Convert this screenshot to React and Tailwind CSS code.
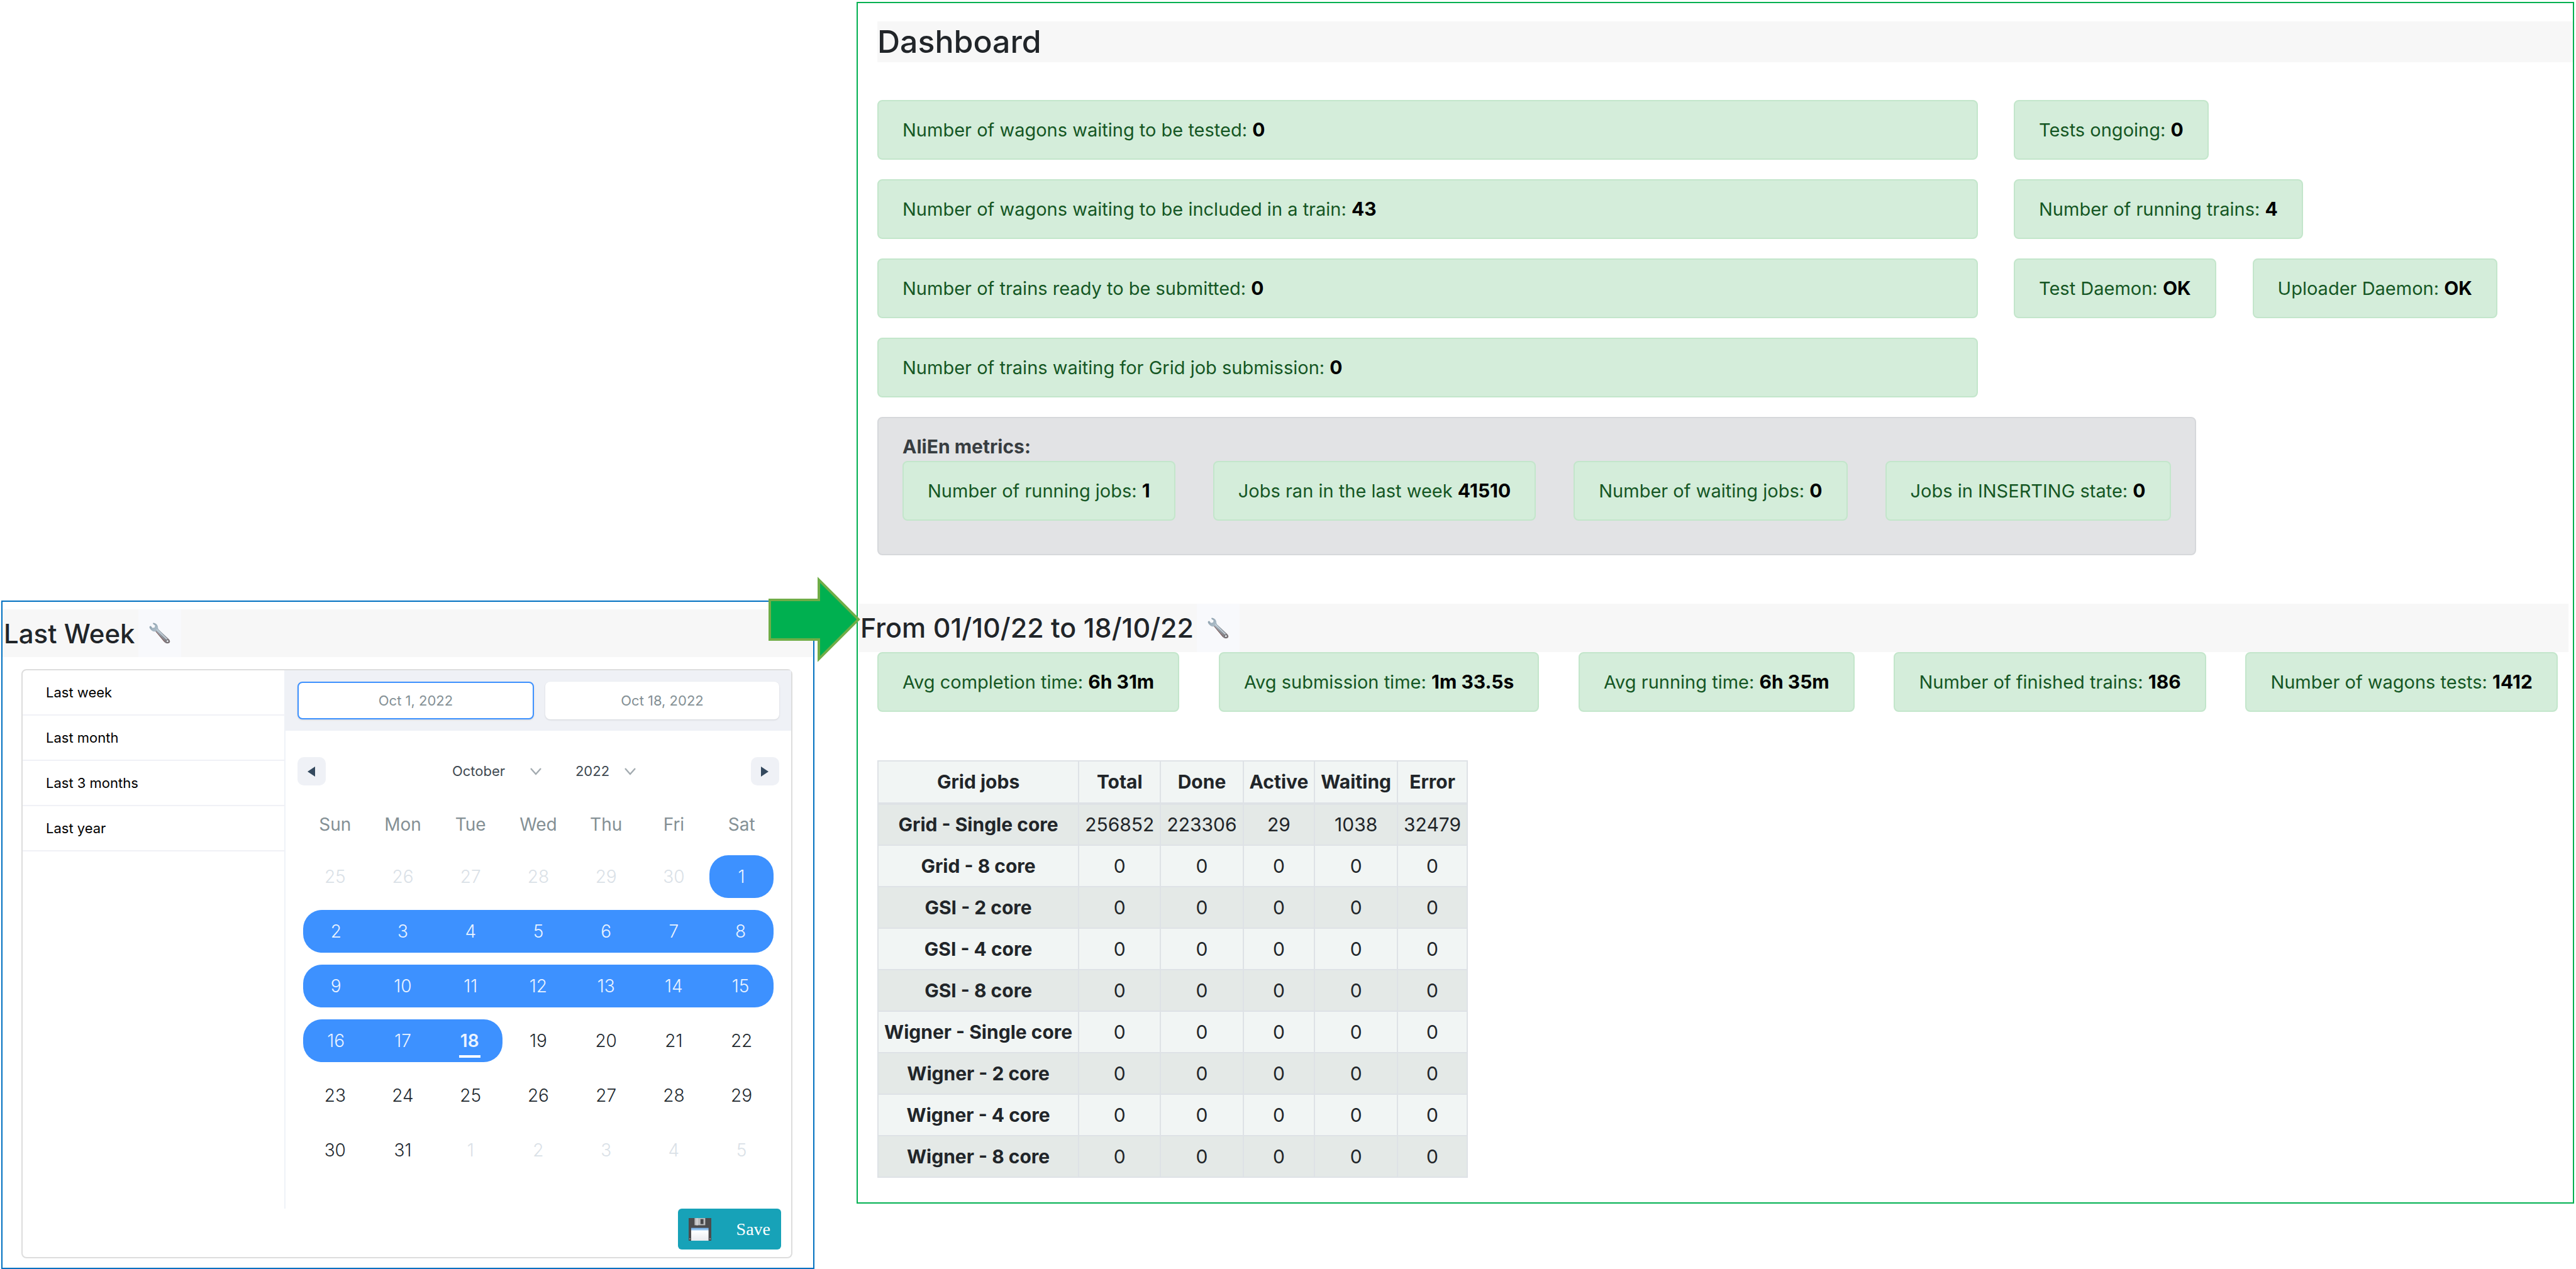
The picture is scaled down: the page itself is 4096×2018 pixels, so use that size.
import React from "react";

function Alert({ label, value, className = "" }) {
  return (
    <div className={`rounded-lg border-2 border-[#c3e6cb] bg-[#d4edda] px-[38px] py-[23px] text-[29px] leading-[45px] whitespace-nowrap text-[#155724] ${className}`}>
      {label} <strong className="text-[30px] leading-none font-bold text-black">{value}</strong>
    </div>
  );
}

function Wrench() {
  return (
    <svg viewBox="78 69 129 129" className="h-[34px] w-[34px]" aria-hidden="true">
      <defs>
        <linearGradient id="steel" x1="0" y1="0" x2="1" y2="1">
          <stop offset="0" stopColor="#8497a4" />
          <stop offset="0.3" stopColor="#a9bac6" />
          <stop offset="0.6" stopColor="#8f979f" />
          <stop offset="1" stopColor="#7d7073" />
        </linearGradient>
      </defs>
      <path
        d="M103 71 Q112 70 120 77 Q132 86 132 102 L135 110 L198 170 Q209 181 201 191 Q188 200 173 189 L118 123 Q108 125 97 119 Q82 110 80 96 Q82 89 89 90 L99 102 L112 98 L115 87 L101 77 Z"
        fill="url(#steel)"
      />
      <path d="M126 112 L184 168" stroke="#c3d0da" strokeWidth="7" strokeLinecap="round" />
      <path d="M119 122 L172 185" stroke="#85605f" strokeWidth="4" />
      <circle cx="189" cy="181" r="8" fill="#e6e9ee" stroke="#6e6c70" strokeWidth="4" />
    </svg>
  );
}

function Floppy() {
  return (
    <svg viewBox="0 0 36 36" className="h-9 w-9" aria-hidden="true">
      <defs>
        <linearGradient id="paper" x1="0" y1="0" x2="0" y2="1">
          <stop offset="0" stopColor="#6fabe6" />
          <stop offset="0.16" stopColor="#9cc8f2" />
          <stop offset="0.24" stopColor="#ffffff" />
          <stop offset="1" stopColor="#e9eaee" />
        </linearGradient>
      </defs>
      <path d="M0 0 H36 V36 H0 Z" fill="#4c4b4d" />
      <rect x="9.4" y="0" width="17" height="11.4" fill="#bcbcbe" />
      <rect x="12" y="0" width="3" height="11.4" fill="#cfcfd1" />
      <rect x="18.8" y="1.6" width="4.8" height="8" fill="#48474a" />
      <rect x="4" y="15.6" width="27.6" height="20.4" fill="url(#paper)" />
      <rect x="1" y="32" width="2" height="2" fill="#8b8b8d" />
      <rect x="33" y="32" width="2" height="2" fill="#8b8b8d" />
    </svg>
  );
}

function Heading({ children, className = "" }) {
  return (
    <div className={`flex items-stretch bg-[#f7f7f7] ${className}`}>
      <h2 className="pl-0.5 leading-[77px] font-medium whitespace-nowrap text-[#212529]">{children}</h2>
      <button type="button" aria-label="Change period" className="ml-[5px] flex w-[68px] items-center justify-center bg-[#f8f9fc]">
        <Wrench />
      </button>
    </div>
  );
}

function Chevron() {
  return (
    <svg viewBox="0 0 18 12" className="pointer-events-none absolute right-0 h-3 w-[18px]" aria-hidden="true">
      <path d="M1 1 L9 10 L17 1" fill="none" stroke="#a3abb0" strokeWidth="2.4" />
    </svg>
  );
}

const presets = ["Last week", "Last month", "Last 3 months", "Last year"];
const weekdays = ["Sun", "Mon", "Tue", "Wed", "Thu", "Fri", "Sat"];

const days = Array.from({ length: 42 }, (_, i) => {
  const n = i - 5;
  if (n < 1) return { day: n + 30, out: true };
  if (n > 31) return { day: n - 31, out: true };
  return { day: n, selected: n <= 18, start: n === 1, end: n === 18 };
});

function Day({ item, index }) {
  const col = index % 7;
  let look = "text-[#22292f] font-light";
  if (item.out) look = "text-[#dae1e7] font-light";
  if (item.selected) look = item.end ? "bg-[#3d91ff] text-[#eaf3ff] font-semibold" : "bg-[#3d91ff] text-[#eaf3ff] font-light";
  const left = item.selected && (col === 0 || item.start) ? "ml-[3px] rounded-l-[30px]" : "";
  const right = item.selected && (col === 6 || item.end) ? "mr-[3px] rounded-r-[30px]" : "";
  return (
    <button type="button" className={`relative h-[68px] text-[28px] ${look} ${left} ${right}`}>
      {item.day}
      {item.end && <span className="absolute bottom-[7px] left-1/2 h-1 w-[34px] -translate-x-1/2 bg-white" />}
    </button>
  );
}

function PeriodPanel() {
  return (
    <section className="relative border-2 border-[#0070c0] pt-3 pb-[15px]">
      <Heading className="h-[76px] text-[42px]">Last Week</Heading>
      <div className="mt-[19px] mr-[33px] ml-[30px] rounded-lg border-2 border-[#dddddd]">
        <div className="flex">
          <ul className="w-[34.2%] shrink-0 border-r-2 border-[#eff2f7]">
            {presets.map((p) => (
              <li key={p} className="border-b-2 border-[#f0f1f6]">
                <button type="button" className="block w-full pl-[37px] text-left text-[22px] leading-[70px] text-black">
                  {p}
                </button>
              </li>
            ))}
          </ul>
          <div className="flex-1">
            <div className="flex gap-[18px] bg-[#eff1f6] px-[19px] py-[18px]">
              <input
                aria-label="Start date"
                readOnly
                value="Oct 1, 2022"
                className="h-[60px] w-0 flex-1 rounded-lg border-2 border-[#3d91ff] bg-white text-center text-[22px] text-[#849095] shadow-sm"
              />
              <input
                aria-label="End date"
                readOnly
                value="Oct 18, 2022"
                className="h-[60px] w-0 flex-1 rounded-lg bg-white text-center text-[22px] text-[#849095] shadow"
              />
            </div>
            <div className="mt-[42px] flex items-center justify-between px-[19px]">
              <button type="button" aria-label="Previous month" className="flex h-[45px] w-[45px] items-center justify-center rounded-[10px] bg-[#eff1f6]">
                <svg viewBox="0 0 12 16" className="h-4 w-3" aria-hidden="true">
                  <path d="M12 0 V16 L0 8 Z" fill="#34495e" />
                </svg>
              </button>
              <div className="flex gap-[54px] pl-[18px] text-[22px] text-[#3f4a52]">
                <div className="relative flex items-center">
                  <select aria-label="Month" className="w-[142px] appearance-none bg-transparent">
                    <option>October</option>
                  </select>
                  <Chevron />
                </div>
                <div className="relative flex items-center">
                  <select aria-label="Year" className="w-[96px] appearance-none bg-transparent">
                    <option>2022</option>
                  </select>
                  <Chevron />
                </div>
              </div>
              <button type="button" aria-label="Next month" className="flex h-[45px] w-[45px] items-center justify-center rounded-[10px] bg-[#eff1f6]">
                <svg viewBox="0 0 12 16" className="h-4 w-3" aria-hidden="true">
                  <path d="M0 0 V16 L12 8 Z" fill="#34495e" />
                </svg>
              </button>
            </div>
            <div className="mt-11 grid grid-cols-7 px-[25px] text-center text-[28px] leading-9 text-[#849095]">
              {weekdays.map((d) => (
                <span key={d}>{d}</span>
              ))}
            </div>
            <div className="mt-[31px] grid grid-cols-7 gap-y-[19px] px-[25px] pb-[59px]">
              {days.map((item, i) => (
                <Day key={i} item={item} index={i} />
              ))}
            </div>
          </div>
        </div>
        <div className="flex justify-end pr-4 pb-3">
          <button type="button" className="flex h-[65px] items-center gap-10 rounded-md bg-[#17a2b8] px-[17px] font-['Liberation_Serif',serif] text-[28px] text-white">
            <Floppy />
            Save
          </button>
        </div>
      </div>
      <svg viewBox="0 0 146 136" className="absolute -top-10 -right-[75px] z-10 h-[136px] w-[146px]" aria-hidden="true">
        <path d="M2 37 H80 V5 L143 68 L80 131 V100 H2 Z" fill="#00b050" stroke="#70ad47" strokeWidth="4" />
      </svg>
    </section>
  );
}

const jobs = [
  ["Grid - Single core", 256852, 223306, 29, 1038, 32479],
  ["Grid - 8 core", 0, 0, 0, 0, 0],
  ["GSI - 2 core", 0, 0, 0, 0, 0],
  ["GSI - 4 core", 0, 0, 0, 0, 0],
  ["GSI - 8 core", 0, 0, 0, 0, 0],
  ["Wigner - Single core", 0, 0, 0, 0, 0],
  ["Wigner - 2 core", 0, 0, 0, 0, 0],
  ["Wigner - 4 core", 0, 0, 0, 0, 0],
  ["Wigner - 8 core", 0, 0, 0, 0, 0],
];

function JobsTable() {
  return (
    <table className="mt-[77px] ml-[31px] border-collapse text-center text-[30px] whitespace-nowrap text-[#212529]">
      <thead>
        <tr className="h-[68px] bg-[#f1f5f4]">
          {["Grid jobs", "Total", "Done", "Active", "Waiting", "Error"].map((h) => (
            <th key={h} scope="col" className="border-2 border-b-4 border-[#dee2e6] px-[9px] font-bold">
              {h}
            </th>
          ))}
        </tr>
      </thead>
      <tbody>
        {jobs.map(([name, ...values]) => (
          <tr key={name} className="h-[66px] odd:bg-[#e4e9e7] even:bg-[#f1f5f4]">
            <th scope="row" className="border-2 border-[#dee2e6] px-[9px] font-bold">
              {name}
            </th>
            {values.map((v, i) => (
              <td key={i} className="border-2 border-[#dee2e6] px-[9px]">
                {v}
              </td>
            ))}
          </tr>
        ))}
      </tbody>
    </table>
  );
}

function Dashboard() {
  return (
    <section className="mt-[3px] self-start border-2 border-[#00b050] pt-[29px] pb-[39px]">
      <h1 className="ml-[31px] bg-[#f7f7f7] text-[50px] leading-[65px] font-medium text-[#212529]">Dashboard</h1>
      <div className="mt-[60px] ml-[31px] grid grid-cols-[1750fr_889fr] gap-x-[57px] gap-y-[31px]">
        <Alert label="Number of wagons waiting to be tested:" value="0" />
        <div className="flex">
          <Alert label="Tests ongoing:" value="0" />
        </div>
        <Alert label="Number of wagons waiting to be included in a train:" value="43" />
        <div className="flex">
          <Alert label="Number of running trains:" value="4" />
        </div>
        <Alert label="Number of trains ready to be submitted:" value="0" />
        <div className="flex gap-[58px]">
          <Alert label="Test Daemon:" value="OK" />
          <Alert label="Uploader Daemon:" value="OK" />
        </div>
        <Alert label="Number of trains waiting for Grid job submission:" value="0" />
      </div>
      <div className="mt-[31px] ml-[31px] w-fit rounded-lg border-2 border-[#d6d8db] bg-[#e2e3e5] px-[38px] pt-[23px] pb-[53px]">
        <p className="text-[30px] leading-[45px] font-bold text-[#383d41]">AliEn metrics:</p>
        <div className="flex gap-[60px]">
          <Alert label="Number of running jobs:" value="1" />
          <Alert label="Jobs ran in the last week" value="41510" />
          <Alert label="Number of waiting jobs:" value="0" />
          <Alert label="Jobs in INSERTING state:" value="0" />
        </div>
      </div>
      <Heading className="mt-[77px] mr-[7px] ml-0.5 h-[77px] text-[43px]">From 01/10/22 to 18/10/22</Heading>
      <div className="mr-6 ml-[31px] flex justify-between">
        <Alert label="Avg completion time:" value="6h 31m" />
        <Alert label="Avg submission time:" value="1m 33.5s" />
        <Alert label="Avg running time:" value="6h 35m" />
        <Alert label="Number of finished trains:" value="186" />
        <Alert label="Number of wagons tests:" value="1412" />
      </div>
      <JobsTable />
    </section>
  );
}

export default function App() {
  return (
    <main className="grid min-h-screen grid-cols-[1293fr_2731fr] items-end gap-x-[67px] bg-white pr-[3px] pl-0.5 font-[Inter,sans-serif]">
      <PeriodPanel />
      <Dashboard />
    </main>
  );
}
